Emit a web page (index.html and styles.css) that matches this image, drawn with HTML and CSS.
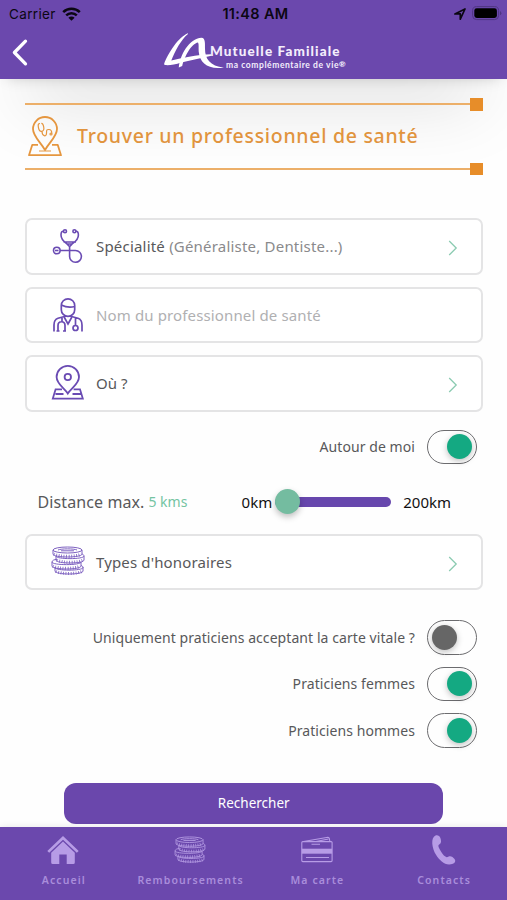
FILE: index.html
```html
<!DOCTYPE html>
<html lang="fr">
<head>
<meta charset="utf-8">
<title>Trouver un professionnel de santé</title>
<link rel="stylesheet" href="styles.css">
</head>
<body>
<svg class="defs" aria-hidden="true">
  <symbol id="chevron" viewBox="0 0 10 16"><path d="M1.200 1 8.200 8l-7 7" fill="none" stroke="currentColor" stroke-width="1.300"/></symbol>
  <symbol id="coins" viewBox="0 0 34 29">
    <g fill="none" stroke="currentColor" stroke-width="1">
      <path d="M2 4v4c0 4 29 4 29 0V4M5 10v4c0 4 28 4 28 0v-4M1 16v4c0 4 29 4 29 0v-4M4 21v4c0 4 28 4 28 0v-4"/>
      <ellipse cx="16.500" cy="4" rx="14.500" ry="3"/>
      <path d="M7 4c3-1.500 16-1.500 19 0M10 4.800h13"/>
      <path d="M5 10c0 3.500 28 3.500 28 0 0-1-1-1.600-2-2M1 16c0 3.500 29 3.500 29 0M1 16c0-1.500 2-2.400 5-2.700M4 21.500c0 3.500 28 3.500 28 0 0-1-.8-1.600-2-2"/>
      <path stroke-width="3" stroke-dasharray=".8 1.700" d="M3 8c4 3 23 3 27 0M6 14c4 3 22 3 26 0M2 20c4 3 23 3 27 0M5 25.200c4 3 22 3 26 0"/>
    </g>
  </symbol>
</svg>
<div class="app">
  <header class="header">
    <div class="status">
      <div class="carrier">Carrier
        <svg width="19" height="14" viewBox="0 0 19 14"><g fill="none" stroke="#0b0712" stroke-width="2.500"><path d="M1.200 5.200a11.800 11.800 0 0 1 16.600 0"/><path d="M4.200 8.400a7.600 7.600 0 0 1 10.600 0"/></g><path d="M6.400 10.700a4.400 4.400 0 0 1 6.200 0L9.500 13.800z" fill="#0b0712"/></svg>
      </div>
      <div class="clock">11:48 AM</div>
      <div class="power">
        <svg width="12" height="12" viewBox="0 0 12 12"><path d="M.9 5.900 11 1 6.300 11.200V5.900z" fill="none" stroke="#0b0712" stroke-width="1.700" stroke-linejoin="round"/></svg>
        <svg width="30" height="15" viewBox="0 0 30 15"><rect x=".6" y=".6" width="26" height="13" rx="4" fill="none" stroke="#4f3583"/><rect x="2.300" y="2.300" width="22.600" height="9.600" rx="2.400" fill="#000"/><path d="M28 5v4.300q1.400-.6 1.400-2.100T28 5" fill="#4f3583"/></svg>
      </div>
    </div>
    <div class="brandbar">
      <svg class="back" width="16" height="27" viewBox="0 0 16 27"><path d="M13.500 2.200 2.400 13.500l11.100 11.300" fill="none" stroke="#fff" stroke-width="3.300" stroke-linecap="round" stroke-linejoin="round"/></svg>
      <div class="brand">
        <svg class="mark" width="61" height="38" viewBox="0 0 61 38" fill="#fff"><path d="M24 .2C14.500 4 4.500 19.500.2 30.600q-.2 1.400.6 1.400c4.500.6 10-.6 16.500-2.600l30-6.600v-1.600C34 21.200 15 25.600 7.300 27.600 11 18 17 6.500 24 .9z"/><path d="M14.800 34.400C16 22 25 5.500 37.500 4.700c4 0 3.500 6 3.500 11 0 9.800 4.800 17.400 19 18.900-15.500 2.500-24.400-4.300-25.300-16-.3-4.500.4-7.600-.7-9.200C27.500 10.500 20.500 23 18.200 33z"/></svg>
        <div class="wordmark"><span class="name">Mutuelle Familiale</span><span class="tagline">ma complémentaire de vie<b>®</b></span></div>
      </div>
    </div>
  </header>

  <main class="content">
    <h1 class="title">
      <svg width="34" height="41" viewBox="0 0 34 41" fill="none" stroke="#e5963f" stroke-width="1.800" stroke-linejoin="round"><path d="M17 34C13 26.500 5 20.500 5 13a12 12 0 0 1 24 0c0 7.500-8 13.500-12 21z"/><path d="M10 28.800H4.300L1 39.200h32l-3.300-10.400H24"/><path d="M11 35h12" stroke-width="1"/><g stroke-width="1.200"><path d="M12 7.500c-2 0-2 1.500-1.600 3.800.5 3 1.600 4.200 3.300 4 2-.3 2.500-2 2-4.500-.4-2-.8-3.600-2.400-3.300M14 15.300c0 5 4.500 6 4.500 2 0-4 .3-3.800 2.500-3.800s2.800 1 2.800 4"/><circle cx="23" cy="18" r="1"/></g></svg>
      <span>Trouver un professionnel de santé</span>
    </h1>

    <div class="field">
      <svg class="icon" width="34" height="34" viewBox="0 0 34 34" fill="none" stroke="#6a4bb3" stroke-width="1.600"><circle cx="13" cy="2.300" r="1.500"/><circle cx="22.400" cy="2.300" r="1.500"/><path d="M11.500 2C9.200 2.200 9 4 9 6c0 5 3.400 7 6.200 9H20c2.800-2 6.400-4 6.400-9 0-2-.2-3.800-2.500-4M11.500 13h12.500M15 15l2.600 2.700L20.200 15M17.600 17.500v9.800A5.900 5.900 0 1 0 23.500 21.500H8"/><circle cx="4.800" cy="21.500" r="3.300"/><path d="M3 21.500h3.500"/></svg>
      <p class="label f-spec">Spécialité <span class="muted">(Généraliste, Dentiste...)</span></p>
      <svg class="chev"><use href="#chevron"/></svg>
    </div>
    <div class="field">
      <svg class="icon" width="34" height="36" viewBox="0 0 34 36" fill="none" stroke="#6a4bb3" stroke-width="1.700"><path d="M9.300 8.500a6.700 6.700 0 0 1 13.400 0v4.200a6.700 6.700 0 0 1-13.400 0zM9.300 8c5 2.500 9 2.700 13.400 1.500M12.500 18v2.700L16 27l3.500-6.300V18"/><path d="M12.500 19.500 6 21.300C3 22.300 2 25 2 28v6.500M19.500 19.500l6.500 1.800c3 1 4 3.700 4 6.700v6.500M10 20v4.500M6 34.500V28.500c0-5 7-5 7 0v6M4.500 34h3M11 34h3M23.500 21v7"/><circle cx="23.500" cy="31" r="2.500"/></svg>
      <p class="placeholder f-nom">Nom du professionnel de santé</p>
    </div>
    <div class="field">
      <svg class="icon" width="34" height="36" viewBox="0 0 34 36" fill="none" stroke="#6a4bb3" stroke-width="1.800"><path d="M15.800 28.500C12.300 23 4.600 19 4.600 12A11.200 11.200 0 0 1 27 12c0 7-7.700 11-11.200 16.500z"/><circle cx="15.800" cy="12" r="3.200"/><path d="M10 24.300H3.600L.8 33.600h30l-2.800-9.300h-6.400M3.500 29h8M20.500 29H29"/></svg>
      <p class="label f-ou">Où ?</p>
      <svg class="chev"><use href="#chevron"/></svg>
    </div>

    <div class="option around"><span>Autour de moi</span><i class="switch on"></i></div>

    <div class="distance">
      <span class="d-label">Distance max.</span><span class="d-value">5 kms</span>
      <span class="d-min">0km</span>
      <div class="slider"><i class="thumb"></i></div>
      <span class="d-max">200km</span>
    </div>

    <div class="field">
      <svg class="icon coins" width="34" height="29"><use href="#coins"/></svg>
      <p class="label f-types">Types d'honoraires</p>
      <svg class="chev"><use href="#chevron"/></svg>
    </div>

    <div class="options">
      <div class="option"><span>Uniquement praticiens acceptant la carte vitale ?</span><i class="switch"></i></div>
      <div class="option"><span>Praticiens femmes</span><i class="switch on"></i></div>
      <div class="option"><span>Praticiens hommes</span><i class="switch on"></i></div>
    </div>

    <button class="submit">Rechercher</button>
  </main>

  <nav class="tabs">
    <a class="tab"><svg width="32" height="30" viewBox="0 0 32 30" fill="#b79ce6"><path d="M16 0 .3 15l1.900 1.800L16 3.700l13.800 13.100 1.900-1.800z"/><path d="M16 5.500 4.200 16.800V26.500q0 1.500 1.500 1.500h6.600V18.500h7.400V28h6.600q1.500 0 1.500-1.500v-9.700z"/></svg><span>Accueil</span></a>
    <a class="tab"><svg width="32" height="30" color="#b097e0"><use href="#coins" width="32" height="27"/></svg><span>Remboursements</span></a>
    <a class="tab"><svg width="32" height="30" viewBox="0 0 32 30" fill="none" stroke="#b79ce6" stroke-width="1.100"><rect x=".8" y="5.600" width="30.300" height="20" rx="1"/><path d="M2.500 5.500 27 1.300q1 0 1.300 1.200l.6 3M15 5.500 27.500 3"/><path d="M.8 15.200h30.300" stroke-width="5"/><path d="M10.500 8.200h8.500M5 21.500h23"/></svg><span>Ma carte</span></a>
    <a class="tab"><svg width="32" height="30" viewBox="0 0 32 30" fill="#b79ce6"><path d="M7.500-.6c2-.7 4 0 4.900 2.500.9 2.600 1.100 5-.9 6.300-1.700 1-1.400 2.200.3 5.200 1.800 3.400 3.500 5.700 5.600 7.200 1.300 1 2 .5 3.300-.1 2.200-1 4.300.7 5.800 2.400 1.500 1.800.6 3.800-1.600 4.800C18 30.400 12 25.300 8 18.800 3.800 11.800 2.500 1.800 7.500-.6z"/></svg><span>Contacts</span></a>
  </nav>
</div>
</body>
</html>
```

FILE: styles.css
```css
* { box-sizing: border-box; }
body {
  margin: 0;
  background: #fefefe;
  font-family: "Noto Sans", "Open Sans", sans-serif;
  color: #58585a;
}
.defs { position: absolute; width: 0; height: 0; }
svg { display: block; flex: none; overflow: visible; }
.app { width: 507px; height: 900px; display: flex; flex-direction: column; overflow: hidden; }

.header {
  flex: none;
  height: 79px;
  background: #6b48ad;
  box-shadow: 0 5px 14px -7px rgba(0,0,0,.22), 0 42px 70px -28px rgba(0,0,0,.26);
}
.status {
  height: 27px;
  display: grid;
  grid-template-columns: 1fr auto 1fr;
  align-items: center;
  padding: 0 5px 0 9px;
  font-family: Inter, sans-serif;
  font-size: 13.500px;
  color: #0b0712;
}
.carrier { display: flex; align-items: center; gap: 6px; letter-spacing: .35px; }
.clock { font-weight: 600; letter-spacing: .35px; font-size: 14.500px; }
.power { display: flex; align-items: center; justify-content: flex-end; gap: 6px; }
.brandbar { display: flex; align-items: flex-start; padding: 12px 0 0 12px; }
.brand { display: flex; margin: -6px 0 0 136px; }
.wordmark { display: flex; flex-direction: column; margin: 11px 0 0 -15px; color: #f4eefc; white-space: nowrap; }
.name { font: 900 13.500px/15px Lato, sans-serif; letter-spacing: 1.100px; }
.tagline { font: 700 8.500px/12px Lato, sans-serif; letter-spacing: .58px; padding-left: 16px; margin-top: -1px; }
.tagline b { font-size: 8px; vertical-align: 1px; }

.content { flex: 1; padding: 24px 24.500px 0 25px; display: flex; flex-direction: column; }
.title {
  position: relative;
  display: flex;
  align-items: center;
  gap: 15px;
  height: 67px;
  margin: 0 0 48px;
  padding: 0 3px;
  border-top: 2px solid #ecaf69;
  border-bottom: 2px solid #ecaf69;
  color: #e1943e;
  font-size: 19.500px;
  font-weight: 500;
  letter-spacing: .7px;
  white-space: nowrap;
}
.title span { margin-top: -2px; }
.title::before, .title::after {
  content: "";
  position: absolute;
  right: 0;
  width: 12.500px;
  height: 12.500px;
  background: #e78d29;
}
.title::before { top: -7px; }
.title::after { bottom: -7px; }

.field {
  flex: none;
  height: 56.500px;
  margin-bottom: 12px;
  display: flex;
  align-items: center;
  border: 2px solid #e4e4e5;
  border-radius: 7px;
  background: #fff;
  padding: 0 23px 0 24.500px;
}
.field p { margin: 0 0 0 10.500px; flex: 1; font-size: 15px; white-space: nowrap; }
.f-spec { letter-spacing: .2px; }
.f-nom { letter-spacing: .13px; }
.f-types { letter-spacing: .14px; }
.muted { color: #8a8a8c; }
.field .placeholder { color: #b0b0b2; }
.chev { width: 10px; height: 16px; margin-top: 4px; color: #8bcbb1; }
.coins { color: #7d60c0; margin-left: -1px; margin-right: 1px; margin-top: -2px; }

.option { display: flex; align-items: center; justify-content: flex-end; gap: 12px; height: 46.500px; padding-right: 6px; font-size: 14px; }
.option span { letter-spacing: .07px; }
.switch {
  flex: none;
  display: flex;
  align-items: center;
  width: 49.500px;
  height: 34.500px;
  padding: 0 4px;
  border: 1.300px solid #6c6c6f;
  border-radius: 18px;
  background: #fefefe;
}
.switch::before { content: ""; width: 25px; height: 25px; border-radius: 50%; background: #666; box-shadow: 0 2px 6px rgba(0,0,0,.25); }
.switch.on { justify-content: flex-end; }
.switch.on::before { background: #14a982; }

.distance { display: flex; align-items: center; height: 63.500px; padding: 0 31.500px 0 12.500px; font-size: 16px; white-space: nowrap; }
.d-label { letter-spacing: .1px; }
.d-value { margin-left: 4px; font-size: 14px; color: #74c4a2; }
.d-min { margin-left: auto; color: #111; font-size: 15px; }
.d-max { color: #111; font-size: 15px; }
.slider { width: 116px; height: 10px; margin: 0 12px 0 3px; border-radius: 5px; background: #6747ad; display: flex; align-items: center; }
.thumb { width: 25px; height: 25px; border-radius: 50%; background: #74bca0; box-shadow: 0 3px 6px rgba(0,0,0,.25); }

.options { margin-top: 12px; }
.submit {
  flex: none;
  align-self: center;
  width: 379px;
  height: 41px;
  margin-top: 29.500px;
  padding: 0 0 2px;
  border: 0;
  border-radius: 12px;
  background: #6a47ac;
  color: #fff;
  font: 400 13.500px "Noto Sans", sans-serif;
}
.tabs {
  flex: none;
  height: 73.500px;
  display: grid;
  grid-template-columns: repeat(4, 1fr);
  background: #6b48ad;
  box-shadow: 0 0 8px rgba(0,0,0,.1);
}
.tab { display: flex; flex-direction: column; align-items: center; padding-top: 9px; color: #a98ddb; font-size: 10.500px; font-weight: 600; letter-spacing: 1.100px; }
.tab span { margin-top: 7px; padding-left: 1px; line-height: 15px; }
```
